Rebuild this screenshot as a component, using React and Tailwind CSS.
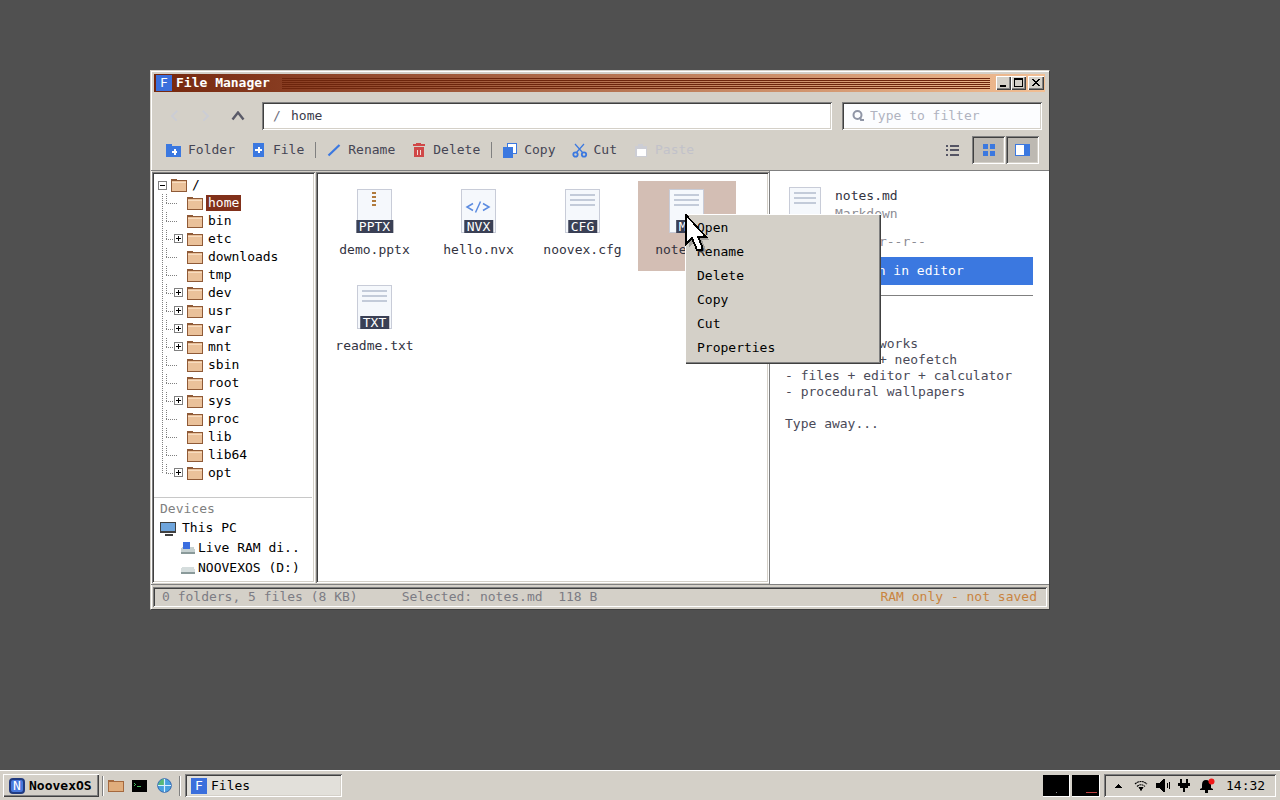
import React, { useState } from 'react';

// two-pixel bevels shared by every panel and button
const SUNKEN = 'shadow-[inset_1px_1px_#808080,inset_-1px_-1px_#ffffff,inset_2px_2px_#404040,inset_-2px_-2px_#d4d0c8]';
const RAISED = 'shadow-[inset_1px_1px_#ffffff,inset_-1px_-1px_#404040,inset_-2px_-2px_#808080]';

const FOLDERS = [
  { name: 'home' },
  { name: 'bin' },
  { name: 'etc', more: true },
  { name: 'downloads' },
  { name: 'tmp' },
  { name: 'dev', more: true },
  { name: 'usr', more: true },
  { name: 'var', more: true },
  { name: 'mnt', more: true },
  { name: 'sbin' },
  { name: 'root' },
  { name: 'sys', more: true },
  { name: 'proc' },
  { name: 'lib' },
  { name: 'lib64' },
  { name: 'opt', more: true }
];

const FILES = [
  { name: 'demo.pptx', ext: 'PPTX', kind: 'archive' },
  { name: 'hello.nvx', ext: 'NVX', kind: 'code' },
  { name: 'noovex.cfg', ext: 'CFG', kind: 'text' },
  { name: 'notes.md', ext: 'MD', kind: 'text' },
  { name: 'readme.txt', ext: 'TXT', kind: 'text' }
];

const MENU = ['Open', 'Rename', 'Delete', 'Copy', 'Cut', 'Properties'];

const NOTES = `# Notes

- the shell works
- terminals + neofetch
- files + editor + calculator
- procedural wallpapers

Type away...`;

const Svg = ({ w, h, className = '', children }) => (
  <svg
    width={w}
    height={h}
    viewBox={`0 0 ${w} ${h}`}
    shapeRendering="crispEdges"
    aria-hidden="true"
    className={`shrink-0 ${className}`}
  >
    {children}
  </svg>
);

const FolderIcon = () => (
  <Svg w={16} h={13}>
    <path d="M0 0h6v1h10v12H0z" fill="#8f5a37" />
    <path d="M1 2h14v10H1z" fill="#eac19a" />
    <path d="M1 3h14v1H1z" fill="#f7dcc0" />
  </Svg>
);

const Expander = ({ open }) => (
  <>
    <rect x="0.5" y="0.5" width="8" height="8" fill="#fff" stroke="#808080" />
    <path d={open ? 'M2 4h5v1H2z' : 'M2 4h5v1H2zM4 2h1v5H4z'} fill="#000" />
  </>
);

const Branch = ({ more, last }) => (
  <Svg w={25} h={18}>
    <path d={last ? 'M0.5 0v9' : 'M0.5 0v18'} stroke="#808080" strokeDasharray="1 1" />
    <path d="M4.5 0v9" stroke="#808080" strokeDasharray="1 1" />
    <path d="M4 9.5h12" stroke="#808080" strokeDasharray="1 1" />
    {more && (
      <g transform="translate(12 4)">
        <Expander />
      </g>
    )}
  </Svg>
);

const LetterBadge = ({ letter }) => (
  <span className="flex size-4 shrink-0 items-center justify-center bg-[#3b6fdc] leading-4 font-normal text-white">
    {letter}
  </span>
);

const PageIcon = ({ w, h, kind }) => (
  <Svg w={w} h={h}>
    <rect x="0.5" y="0.5" width={w - 1} height={h - 1} fill="#f5f8fc" stroke="#c8ccd8" />
    {kind === 'text' && (
      <path d={`M5 6h${w - 10}M5 11h${w - 10}M5 16h${w - 10}`} stroke="#c3cbd9" strokeWidth="2" />
    )}
    {kind === 'archive' && <path d="M17 3v14" stroke="#b07a3c" strokeWidth="4" strokeDasharray="2 2" />}
    {kind === 'code' && (
      <g shapeRendering="auto" fill="none" stroke="#5b8be0" strokeWidth="1.5">
        <path d="M12 14.5L6 18L12 21.5M22 14.5L28 18L22 21.5M19.5 12.5L14.5 23.5" />
      </g>
    )}
  </Svg>
);

const Cursor = () => (
  <Svg w={26} h={40} className="absolute top-0 left-0">
    <path d="M4 28V33L9 28L14 39H19L21 36L17 26H24L21 22H13L17 36H12L8 25z" fill="#707070" opacity="0.5" />
    <path d="M1 1V30L7 24L12 36H17V32L13 23H21z" fill="#fff" stroke="#000" strokeWidth="1.8" />
  </Svg>
);

const ToolButton = ({ label, icon, disabled }) => (
  <button
    type="button"
    disabled={disabled}
    className={`flex h-7 items-center gap-[6px] px-2 ${disabled ? 'text-[#c2c2ca]' : 'text-[#454554]'}`}
  >
    <span className="flex w-4 justify-center">{icon}</span>
    {label}
  </button>
);

const Separator = () => <span className="mr-[2px] ml-[3px] h-4 w-px bg-[#808080]" />;

const TitleBar = () => (
  <header className="mr-1 ml-[3px] flex h-[18px] shrink-0 items-center bg-linear-to-r from-[#75260c] to-[#f2bf94] pr-px pl-[2px]">
    <LetterBadge letter="F" />
    <h1 className="ml-1 font-bold text-white">File Manager</h1>
    <span className="mr-[6px] ml-[12px] h-[11px] flex-1 bg-[repeating-linear-gradient(#6d250c_0px,#6d250c_1px,transparent_1px,transparent_2px)]" />
    <button type="button" aria-label="Minimize" className={`h-[14px] w-[15px] bg-[#d4d0c8] pl-1 ${RAISED}`}>
      <Svg w={6} h={10}><path d="M0 7h6v2H0z" fill="#000" /></Svg>
    </button>
    <button type="button" aria-label="Maximize" className={`flex h-[14px] w-[15px] justify-center bg-[#d4d0c8] pt-[2px] ${RAISED}`}>
      <Svg w={9} h={9}><path d="M0 0h9v9H0zM1 2v6h7V2z" fill="#000" fillRule="evenodd" /></Svg>
    </button>
    <button type="button" aria-label="Close" className={`ml-[2px] flex h-[14px] w-4 justify-center bg-[#d4d0c8] pt-[3px] ${RAISED}`}>
      <Svg w={8} h={7}>
        <path d="M0 0h2v1h1v1h2V1h1V0h2v1H7v1H6v1H5v1h1v1h1v1h1v1H6V6H5V5H3v1H2v1H0V6h1V5h1V4h1V3H2V2H1V1H0z" fill="#000" />
      </Svg>
    </button>
  </header>
);

const AddressRow = () => (
  <div className="flex items-center px-[7px]">
    <button type="button" disabled aria-label="Back" className="flex h-7 w-8 items-center justify-center">
      <Svg w={8} h={12}><path d="M7 1L2 6l5 5" fill="none" stroke="#cccdd3" strokeWidth="2" /></Svg>
    </button>
    <button type="button" disabled aria-label="Forward" className="flex h-7 w-8 items-center justify-center">
      <Svg w={8} h={12}><path d="M1 1l5 5l-5 5" fill="none" stroke="#cccdd3" strokeWidth="2" /></Svg>
    </button>
    <button type="button" aria-label="Up" className="flex h-7 w-8 items-center justify-center">
      <svg width="14" height="10" viewBox="0 0 14 10" aria-hidden="true">
        <path d="M1.5 8.5L7 1.5l5.5 7" fill="none" stroke="#5a5a68" strokeWidth="2.4" />
      </svg>
    </button>
    <label className={`ml-2 flex h-7 min-w-0 flex-1 items-center bg-white px-[11px] ${SUNKEN}`}>
      <span className="w-[18px] shrink-0 text-[#6e6e7c]">/</span>
      <input aria-label="Path" defaultValue="home" className="min-w-0 flex-1 bg-transparent text-[#3a3a4a] outline-none" />
    </label>
    <label className={`ml-[10px] flex h-7 w-[200px] items-center gap-[5px] bg-[#fcfdff] pr-2 pl-[10px] ${SUNKEN}`}>
      <svg width="13" height="12" viewBox="0 0 13 12" aria-hidden="true" className="shrink-0">
        <circle cx="5.5" cy="5" r="4" fill="none" stroke="#8f95a6" strokeWidth="2" />
        <path d="M8 7l1 3h3" fill="none" stroke="#8f95a6" strokeWidth="2" />
      </svg>
      <input
        aria-label="Filter files"
        placeholder="Type to filter"
        className="min-w-0 flex-1 bg-transparent text-[#3a3a4a] outline-none placeholder:text-[#b0b3c0]"
      />
    </label>
  </div>
);

const Toolbar = () => (
  <div className="mt-[6px] flex items-center pr-[10px] pl-[7px]">
    <ToolButton
      label="Folder"
      icon={
        <Svg w={16} h={13}>
          <path d="M0 0h6v2h9v11H0z" fill="#3b78e0" />
          <path d="M6 7h5v2H6zM8 5h2v6H8z" fill="#fff" />
        </Svg>
      }
    />
    <ToolButton
      label="File"
      icon={
        <Svg w={12} h={14}>
          <path d="M0 0h11v14H0z" fill="#3b78e0" />
          <path d="M2 6h7v2H2zM5 4h2v6H5z" fill="#fff" />
        </Svg>
      }
    />
    <Separator />
    <ToolButton
      label="Rename"
      icon={
        <svg width="14" height="14" viewBox="0 0 14 14" aria-hidden="true">
          <path d="M1.5 12.5L12.5 2" stroke="#3b78e0" strokeWidth="2.2" />
        </svg>
      }
    />
    <ToolButton
      label="Delete"
      icon={
        <Svg w={12} h={14}>
          <path d="M3 0h5v1h4v2H0V1h3zM1 4h10v10H1z" fill="#d04848" />
          <path d="M4 7h1v5H4zM7 7h1v5H7z" fill="#f4dcd8" />
        </Svg>
      }
    />
    <Separator />
    <ToolButton
      label="Copy"
      icon={
        <Svg w={14} h={15}>
          <path d="M4 0h10v11H4z" fill="#3b78e0" />
          <path d="M5 1h8v9H5z" fill="#fff" />
          <path d="M0 4h10v11H0z" fill="#3b78e0" />
        </Svg>
      }
    />
    <ToolButton
      label="Cut"
      icon={
        <svg width="16" height="15" viewBox="0 0 16 15" fill="none" stroke="#3b78e0" aria-hidden="true">
          <path d="M3 1l8 9M12 1l-8 9" strokeWidth="1.2" />
          <circle cx="3.5" cy="11.5" r="2.2" strokeWidth="1.8" />
          <circle cx="12" cy="11.5" r="2.2" strokeWidth="1.8" />
        </svg>
      }
    />
    <ToolButton
      label="Paste"
      disabled
      icon={
        <Svg w={12} h={13}>
          <path d="M0 2h3V0h5v2h4v11H0z" fill="#cccdd4" />
          <path d="M2 5h9v7H2z" fill="#fff" />
        </Svg>
      }
    />
    <button type="button" aria-label="List view" className="mr-1 ml-auto flex h-7 w-8 items-center justify-center">
      <Svg w={13} h={11}>
        <path d="M0 0h2v2H0zM4 0h9v2H4zM0 4h2v2H0zM4 4h9v2H4zM0 9h2v2H0zM4 9h9v2H4z" fill="#555564" />
      </Svg>
    </button>
    <button type="button" aria-label="Grid view" aria-pressed="true" className={`flex h-7 w-[33px] items-center justify-center bg-[#bdb9b2] ${SUNKEN}`}>
      <Svg w={12} h={12}><path d="M0 0h5v5H0zM7 0h5v5H7zM0 7h5v5H0zM7 7h5v5H7z" fill="#3b78e0" /></Svg>
    </button>
    <button type="button" aria-label="Preview pane" aria-pressed="true" className={`ml-px flex h-7 w-[33px] items-center justify-center bg-[#bdb9b2] ${SUNKEN}`}>
      <Svg w={15} h={12}>
        <path d="M0 0h15v12H0z" fill="#3b78e0" />
        <path d="M1 1h8v10H1z" fill="#fff" />
      </Svg>
    </button>
  </div>
);

const Sidebar = ({ folder, onSelect }) => (
  <nav className={`flex w-[163px] shrink-0 flex-col bg-white px-[2px] pt-1 pb-[5px] text-black ${SUNKEN}`}>
    <div className="flex h-[18px] items-center pl-1">
      <Svg w={9} h={9}><Expander open /></Svg>
      <span className="ml-1 flex items-center gap-[5px]"><FolderIcon />/</span>
    </div>
    <ul className="pl-2">
      {FOLDERS.map(({ name, more }, index) => (
        <li key={name} className="flex h-[18px] items-center">
          <Branch more={more} last={index === FOLDERS.length - 1} />
          <FolderIcon />
          <button
            type="button"
            onClick={() => onSelect(name)}
            className={`ml-[3px] h-4 px-[2px] leading-4 ${folder === name ? 'bg-[#81301a] text-white' : ''}`}
          >
            {name}
          </button>
        </li>
      ))}
    </ul>
    <div className="mt-auto mr-px border-t border-[#c8c8c8] pt-[2px] pl-[6px]">
      <h2 className="leading-[18px] text-[#808080]">Devices</h2>
      <div className="flex h-5 items-center gap-[6px]">
        <Svg w={16} h={16}>
          <path d="M0 2h16v11H0zM5 14h8v2H5z" fill="#404040" />
          <path d="M1 3h14v8H1z" fill="#6fa5dc" />
        </Svg>
        This PC
      </div>
      <div className="flex h-5 items-center gap-[3px] pl-[21px]">
        <Svg w={14} h={12}>
          <path d="M1 5h12l1 3v4H0V8z" fill="#c5d0d0" />
          <path d="M0 10h14v2H0z" fill="#8a9a9a" />
          <path d="M2 0h7v7H2z" fill="#3b6fe0" />
        </Svg>
        Live RAM di..
      </div>
      <div className="flex h-5 items-center gap-[3px] pl-[21px]">
        <Svg w={14} h={12}>
          <path d="M1 5h12l1 3v4H0V8z" fill="#d5dddd" />
          <path d="M0 10h14v2H0z" fill="#8a9a9a" />
        </Svg>
        NOOVEXOS (D:)
      </div>
    </div>
  </nav>
);

const ContextMenu = () => (
  <div className="absolute top-[33px] left-[47px] z-10">
    <ul role="menu" className={`w-[196px] bg-[#d4d0c8] pt-[2px] pb-1 ${RAISED}`}>
      {MENU.map((item) => (
        <li key={item} role="none">
          <button type="button" role="menuitem" className="block h-6 w-full px-3 text-left text-black">
            {item}
          </button>
        </li>
      ))}
    </ul>
    <Cursor />
  </div>
);

const FileTile = ({ file, selected, onSelect }) => (
  <li className="relative">
    <button
      type="button"
      onClick={onSelect}
      className={`flex h-[90px] w-[98px] flex-col items-center pt-2 pr-px text-[#33333f] ${selected ? 'bg-[#d3beb4]' : ''}`}
    >
      <span className="relative block">
        <PageIcon w={35} h={44} kind={file.kind} />
        <span className="absolute bottom-0 left-1/2 h-[13px] -translate-x-1/2 bg-[#3a4055] px-[3px] leading-[13px] text-white">
          {file.ext}
        </span>
      </span>
      <span className="mt-2 leading-[18px]">{file.name}</span>
    </button>
    {selected && <ContextMenu />}
  </li>
);

const Preview = () => (
  <aside className="flex w-[280px] shrink-0 flex-col border-l border-[#808080] bg-white pt-4 pr-4 pl-[15px] text-[#4a4a58]">
    <div className="flex gap-[14px] pl-1">
      <PageIcon w={32} h={40} kind="text" />
      <div className="leading-[18px]">
        <p className="text-[#33333f]">notes.md</p>
        <p className="text-[#8c8c94]">Markdown</p>
      </div>
    </div>
    <p className="mt-[6px] leading-[18px] whitespace-pre text-[#8c8c94]">{'118 B   -rw-r--r--'}</p>
    <button type="button" className="mt-[6px] h-7 bg-[#3b78e0] text-white">Open in editor</button>
    <pre className="mt-[10px] border-t border-[#808080] pt-2 font-[inherit] leading-4">{NOTES}</pre>
  </aside>
);

const Taskbar = () => (
  <footer className="flex h-[30px] shrink-0 items-center border-t border-white bg-[#d4d0c8] pr-1 pl-[3px] text-black">
    <button type="button" className={`flex h-[23px] w-24 items-center gap-1 bg-[#d4d0c8] pl-[6px] font-bold ${RAISED}`}>
      <span className="flex size-4 shrink-0 items-center justify-center rounded-[4px] border-2 border-[#203a80] bg-[#4878dc] leading-3 font-normal text-white">
        N
      </span>
      NoovexOS
    </button>
    <span className="mr-1 ml-[3px] h-5 w-[2px] border-r border-l border-r-white border-l-[#808080]" />
    <button type="button" aria-label="Files" className="flex w-4">
      <Svg w={16} h={12}>
        <path d="M0 0h6v1h10v11H0z" fill="#a5693e" />
        <path d="M1 2h14v9H1z" fill="#e0ad7c" />
      </Svg>
    </button>
    <button type="button" aria-label="Terminal" className="ml-2 flex w-4">
      <Svg w={15} h={12}>
        <path d="M0 0h15v12H0z" fill="#000" />
        <path d="M2 3h1v1H2zM3 4h1v1H3zM2 5h1v1H2zM5 6h4v1H5z" fill="#48c060" />
      </Svg>
    </button>
    <button type="button" aria-label="Browser" className="ml-[9px] flex w-4">
      <svg width="15" height="15" viewBox="0 0 15 15" aria-hidden="true">
        <circle cx="7.5" cy="7.5" r="6.8" fill="#48a0e0" stroke="#3468b0" />
        <path d="M2 5q2-4 5-4v6H1z" fill="#58b878" />
        <path d="M7.5 1v13M1 7.5h13" stroke="#d8f0ff" strokeWidth="1.2" />
      </svg>
    </button>
    <span className="mr-1 ml-[6px] h-5 w-[2px] border-r border-l border-r-white border-l-[#808080]" />
    <button type="button" className={`flex h-[23px] w-[157px] items-center gap-1 bg-[#e2e0da] pl-[6px] ${SUNKEN}`}>
      <LetterBadge letter="F" />
      Files
    </button>

    <div className="ml-auto flex items-center">
      <Svg w={27} h={22} className="border-r border-b border-white">
        <path d="M0 0h27v22H0z" fill="#000" />
        <path d="M14 18h1v1h-1z" fill="#888" />
      </Svg>
      <Svg w={28} h={22} className="ml-[2px] border-r border-b border-white">
        <path d="M0 0h28v22H0z" fill="#000" />
        <path d="M14 18h12v1H14z" fill="#c04040" />
      </Svg>
      <div className={`ml-1 flex h-[23px] w-[172px] items-center pl-[11px] ${SUNKEN}`}>
        <Svg w={8} h={4}><path d="M3 0h1v1h1v1h1v1h1v1H0V3h1V2h1V1h1z" fill="#000" /></Svg>
        <svg width="14" height="12" viewBox="0 0 14 12" className="ml-[11px]" fill="none" stroke="#000" aria-hidden="true">
          <path d="M1 4q6-5 12 0M3 6.500q4-3.500 8 0" strokeWidth="1.1" strokeDasharray="2 0.500" />
          <path d="M5 7.500h4L7 10zM7 8v3" fill="#000" />
        </svg>
        <Svg w={15} h={13} className="ml-2">
          <path d="M0 4h4V3h1V2h1V1h1V0h2v13H7v-1H6v-1H5v-1H4V9H0zM11 4h1v5h-1zM13 3h1v7h-1z" fill="#000" />
        </Svg>
        <Svg w={12} h={13} className="ml-[7px]">
          <path d="M2 0h2v4h4V0h2v4h2v3h-2v2H7v4H5V9H2V7H0V4h2z" fill="#000" />
        </Svg>
        <svg width="15" height="15" viewBox="0 0 15 15" className="mb-px ml-[10px]" aria-hidden="true">
          <path d="M2 7q0-5 4-5t5 5v3l2 1v1H8v3H5v-3H0v-1l2-1z" fill="#000" />
          <circle cx="11.500" cy="3.500" r="3" fill="#f01818" />
        </svg>
        <time className="ml-[11px]">14:32</time>
      </div>
    </div>
  </footer>
);

const App = () => {
  const [folder, setFolder] = useState('home');
  const [selected, setSelected] = useState('notes.md');

  return (
    <div className="flex min-h-screen flex-col bg-[#505050] font-['DejaVu_Sans_Mono',monospace] text-[13px] leading-4">
      <main className="flex flex-1 pt-[70px] pr-[230px] pb-[160px] pl-[150px]">
        <section className="flex min-w-0 flex-1 flex-col border border-[#404040] border-t-[#d4d0c8] border-l-[#d4d0c8] bg-[#d4d0c8] pt-[3px] shadow-[inset_1px_1px_#ffffff]">
          <TitleBar />
          <div className="mt-[2px] flex flex-col border-b border-[#808080] pt-2 pb-[6px]">
            <AddressRow />
            <Toolbar />
          </div>

          <div className="flex min-h-0 flex-1 border-b border-[#808080] pl-px">
            <div className="flex min-w-0 flex-1 gap-px pt-px pb-px">
              <Sidebar folder={folder} onSelect={setFolder} />
              <ul className={`flex min-w-0 flex-1 flex-wrap content-start gap-[6px] bg-white px-[10px] pt-[9px] ${SUNKEN}`}>
                {FILES.map((file) => (
                  <FileTile
                    key={file.name}
                    file={file}
                    selected={selected === file.name}
                    onSelect={() => setSelected(file.name)}
                  />
                ))}
              </ul>
            </div>
            <Preview />
          </div>

          <div className={`m-[2px] flex h-5 items-center pr-[10px] pl-[9px] text-[#7c7c84] ${SUNKEN}`}>
            <span>0 folders, 5 files (8 KB)</span>
            <span className="ml-11 whitespace-pre">{'Selected: notes.md  118 B'}</span>
            <span className="ml-auto text-[#c9843f]">RAM only - not saved</span>
          </div>
        </section>
      </main>
      <Taskbar />
    </div>
  );
};

export default App;
